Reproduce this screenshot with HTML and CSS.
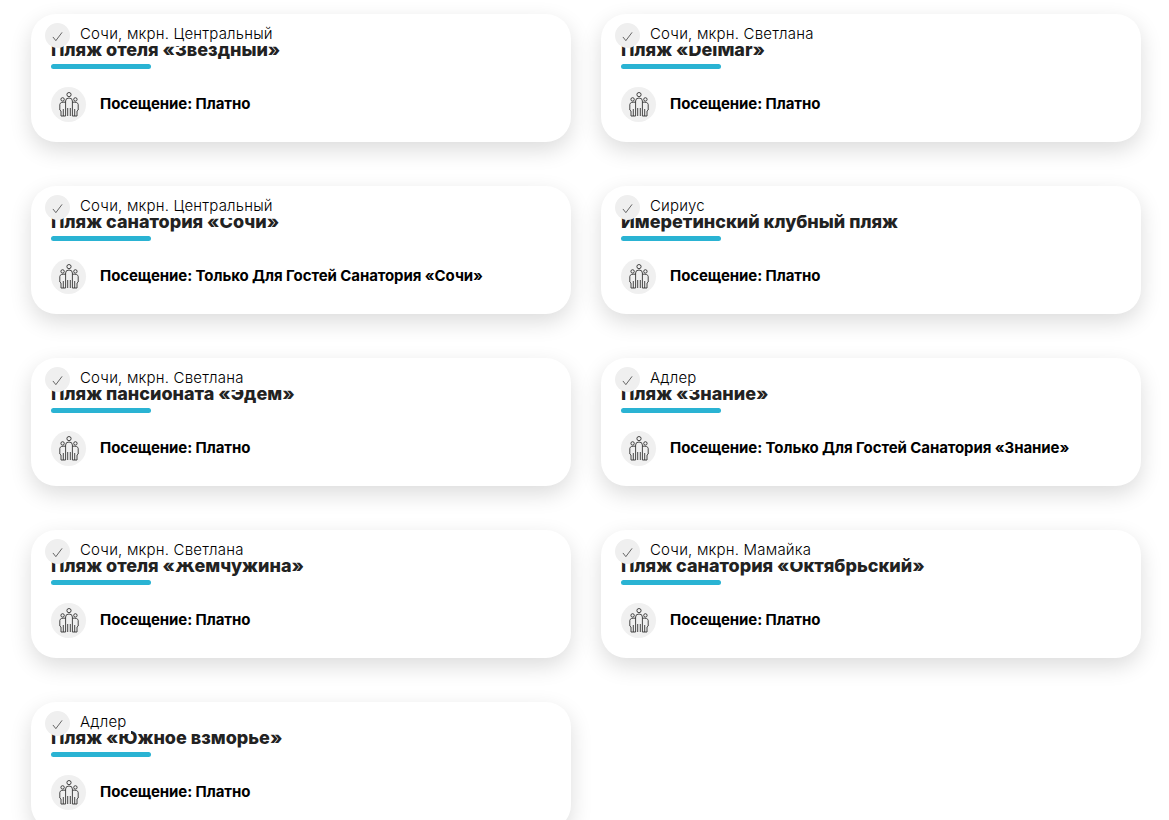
FILE: index.html
```html
<!DOCTYPE html>
<html lang="en">
<head>
    <meta charset="UTF-8">
    <meta name="viewport" content="width=device-width, initial-scale=1.0">
    <title>Пляжи</title>
    <link rel="stylesheet" href="styles.css">
</head>
<body>
    <svg class="icon-defs" width="0" height="0">
        <symbol id="check" viewBox="0 0 12 12">
            <path d="M1 6.5 L4.2 10.5 L11 1.5" fill="none" stroke="#333" stroke-width="0.8"/>
        </symbol>
        <symbol id="people" viewBox="0 0 20 25">
            <g fill="none" stroke="#333" stroke-width="0.9">
                <circle cx="10" cy="2.6" r="2.1"/>
                <circle cx="3.6" cy="7.4" r="1.7"/>
                <circle cx="16.4" cy="7.4" r="1.7"/>
                <path d="M6.6 24 V9 Q6.6 6 10 6 Q13.4 6 13.4 9 V24"/>
                <path d="M6.6 10.2 Q1 9.8 .8 12.5 V18 L2 19 V24 H6.6"/>
                <path d="M13.4 10.2 Q19 9.8 19.2 12.5 V18 L18 19 V24 H13.4"/>
                <path d="M8.7 16 V24 M11.3 16 V24 M4.3 17 V24 M15.7 17 V24"/>
            </g>
        </symbol>
    </svg>

    <div class="beaches">
        <div class="card">
            <div class="location"><span class="check"><svg><use href="#check"/></svg></span><span class="place">Сочи, мкрн. Центральный</span></div>
            <h3 class="title">Пляж отеля «Звездный»</h3>
            <div class="line"></div>
            <div class="visit"><span class="visit-icon"><svg><use href="#people"/></svg></span><span class="visit-text">Посещение: Платно</span></div>
        </div>
        <div class="card">
            <div class="location"><span class="check"><svg><use href="#check"/></svg></span><span class="place">Сочи, мкрн. Светлана</span></div>
            <h3 class="title">Пляж «DelMar»</h3>
            <div class="line"></div>
            <div class="visit"><span class="visit-icon"><svg><use href="#people"/></svg></span><span class="visit-text">Посещение: Платно</span></div>
        </div>
        <div class="card">
            <div class="location"><span class="check"><svg><use href="#check"/></svg></span><span class="place">Сочи, мкрн. Центральный</span></div>
            <h3 class="title">Пляж санатория «Сочи»</h3>
            <div class="line"></div>
            <div class="visit"><span class="visit-icon"><svg><use href="#people"/></svg></span><span class="visit-text">Посещение: Только Для Гостей Санатория «Сочи»</span></div>
        </div>
        <div class="card">
            <div class="location"><span class="check"><svg><use href="#check"/></svg></span><span class="place">Сириус</span></div>
            <h3 class="title">Имеретинский клубный пляж</h3>
            <div class="line"></div>
            <div class="visit"><span class="visit-icon"><svg><use href="#people"/></svg></span><span class="visit-text">Посещение: Платно</span></div>
        </div>
        <div class="card">
            <div class="location"><span class="check"><svg><use href="#check"/></svg></span><span class="place">Сочи, мкрн. Светлана</span></div>
            <h3 class="title">Пляж пансионата «Эдем»</h3>
            <div class="line"></div>
            <div class="visit"><span class="visit-icon"><svg><use href="#people"/></svg></span><span class="visit-text">Посещение: Платно</span></div>
        </div>
        <div class="card">
            <div class="location"><span class="check"><svg><use href="#check"/></svg></span><span class="place">Адлер</span></div>
            <h3 class="title">Пляж «Знание»</h3>
            <div class="line"></div>
            <div class="visit"><span class="visit-icon"><svg><use href="#people"/></svg></span><span class="visit-text">Посещение: Только Для Гостей Санатория «Знание»</span></div>
        </div>
        <div class="card">
            <div class="location"><span class="check"><svg><use href="#check"/></svg></span><span class="place">Сочи, мкрн. Светлана</span></div>
            <h3 class="title">Пляж отеля «Жемчужина»</h3>
            <div class="line"></div>
            <div class="visit"><span class="visit-icon"><svg><use href="#people"/></svg></span><span class="visit-text">Посещение: Платно</span></div>
        </div>
        <div class="card">
            <div class="location"><span class="check"><svg><use href="#check"/></svg></span><span class="place">Сочи, мкрн. Мамайка</span></div>
            <h3 class="title">Пляж санатория «Октябрьский»</h3>
            <div class="line"></div>
            <div class="visit"><span class="visit-icon"><svg><use href="#people"/></svg></span><span class="visit-text">Посещение: Платно</span></div>
        </div>
        <div class="card">
            <div class="location"><span class="check"><svg><use href="#check"/></svg></span><span class="place">Адлер</span></div>
            <h3 class="title">Пляж «Южное взморье»</h3>
            <div class="line"></div>
            <div class="visit"><span class="visit-icon"><svg><use href="#people"/></svg></span><span class="visit-text">Посещение: Платно</span></div>
        </div>
    </div>
</body>
</html>
```

FILE: styles.css
```css
html, body {
    height: 820px;
    overflow: hidden;
}

body {
    margin: 0;
    background-color: #fff;
    font-family: "Inter", "Noto Sans", sans-serif;
    color: #000;
}

.icon-defs {
    display: block;
    height: 0;
}

.beaches {
    display: grid;
    grid-template-columns: 540px 540px;
    column-gap: 30px;
    row-gap: 44px;
    padding: 14px 0 0 31px;
}

.card {
    position: relative;
    height: 128px;
    box-sizing: border-box;
    padding: 26px 20px 0;
    background-color: #fff;
    border-radius: 25px;
    box-shadow: 0 8px 22px rgba(0, 0, 0, 0.14);
}

.location {
    position: absolute;
    top: 9px;
    left: 14px;
    display: flex;
    align-items: center;
    gap: 10px;
    height: 23px;
    padding-right: 4px;
    background-color: #fff;
    font-size: 15px;
    font-weight: 300;
    letter-spacing: 0.2px;
    color: #000;
}

.place {
    padding-bottom: 2px;
}

.check {
    display: flex;
    align-items: center;
    justify-content: center;
    width: 25px;
    height: 25px;
    margin-top: 2px;
    border-radius: 50%;
    background-color: #efefef;
}

.check svg {
    width: 11px;
    height: 11px;
    margin-top: 2px;
}

.title {
    margin: 0;
    font-size: 18px;
    line-height: 20px;
    font-weight: 800;
    color: #222;
    white-space: nowrap;
}

.line {
    width: 100px;
    height: 5px;
    margin-top: 4px;
    border-radius: 3px;
    background-color: #2ab3d3;
}

.visit {
    display: flex;
    align-items: center;
    gap: 14px;
    margin-top: 18px;
    font-size: 15px;
    font-weight: 700;
    letter-spacing: -0.08px;
}

.visit-text {
    padding-bottom: 3px;
}

.visit-icon {
    display: flex;
    align-items: center;
    justify-content: center;
    width: 35px;
    height: 35px;
    border-radius: 50%;
    background-color: #f0f0f0;
}

.visit-icon svg {
    width: 20px;
    height: 25px;
}
```
